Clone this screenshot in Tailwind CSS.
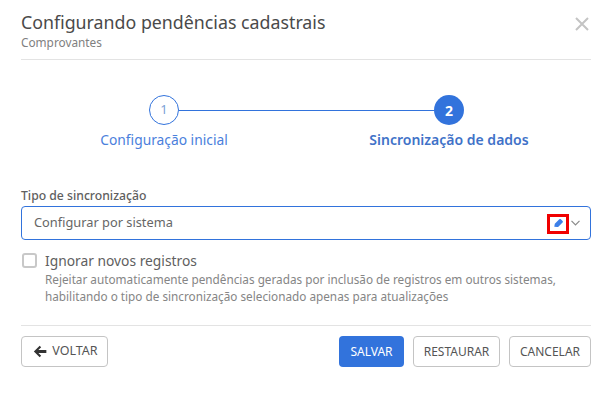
<!DOCTYPE html>
<html lang="pt-BR">
<head>
    <meta charset="UTF-8">
    <title>Configurando pendências cadastrais</title>
    <script src="https://cdn.jsdelivr.net/npm/@tailwindcss/browser@4"></script>
</head>
<body class="bg-white font-['Noto_Sans',sans-serif] text-[#444]">
    <div class="w-[613px] h-[414px] pl-[21px] pr-[22px] pt-[10px] flex flex-col">
        <!-- header -->
        <div class="flex justify-between border-b border-[#e3e3e3] h-[50px]">
            <div>
                <h1 class="text-[17.8px] leading-[24px] text-[#4a4a4a]">Configurando pendências cadastrais</h1>
                <p class="mt-px text-[11.8px] leading-[14px] text-[#808080]">Comprovantes</p>
            </div>
            <svg class="w-[14px] h-[14px] mt-[7px] mr-[2px]" viewBox="0 0 14 14" fill="none" stroke="#c4c4c4" stroke-width="2"><path d="M1 1l12 12M13 1L1 13"/></svg>
        </div>

        <!-- stepper -->
        <div class="flex mt-[35px] pl-[79px]">
            <div class="w-[128px] flex flex-col items-center">
                <div class="w-[30px] h-[30px] rounded-full border border-[#3273dc] flex items-center justify-center text-[13px] text-[#7d9fd6]">1</div>
                <span class="mt-[5px] text-[13.8px] leading-[20px] text-[#4a80dc] whitespace-nowrap">Configuração inicial</span>
            </div>
            <div class="w-[255px] h-px bg-[#3273dc] mt-[15px] ml-[-49px] mr-[-65px]"></div>
            <div class="w-[160px] flex flex-col items-center">
                <div class="w-[30px] h-[30px] rounded-full bg-[#3273dc] flex items-center justify-center text-[14px] font-bold text-white">2</div>
                <span class="mt-[5px] text-[14px] leading-[20px] font-semibold text-[#3f72c8] whitespace-nowrap">Sincronização de dados</span>
            </div>
        </div>

        <!-- form -->
        <label class="mt-[38px] text-[12.2px] leading-[16px] font-medium text-[#606060]">Tipo de sincronização</label>
        <div class="mt-[2px] h-[34px] border border-[#3273dc] rounded-[4px] flex items-center pl-[12px] pr-[10px]">
            <span class="flex-1 text-[12.8px] text-[#666]">Configurar por sistema</span>
            <span class="relative w-[10px] h-[10px] mr-[7px]">
                <svg class="w-[9px] h-[9px]" viewBox="0 0 10 10"><path d="M0.3 9.7l0.6-3.2 5-5c0.5-0.5 1.2-0.5 1.7 0l1.9 1.9c0.5 0.5 0.5 1.2 0 1.7l-5 5z" fill="#3d7fe8"/></svg>
                <span class="absolute left-[-7px] top-[-4px] w-[22px] h-[20px] border-[3px] border-[#f00000]"></span>
            </span>
            <svg class="w-[9px] h-[6px]" viewBox="0 0 9 6" fill="none" stroke="#8a8a8a" stroke-width="1.2"><path d="M0.5 0.8l4 4 4-4"/></svg>
        </div>

        <div class="flex mt-[11px]">
            <span class="w-[15px] h-[15px] mt-[2px] ml-[1px] border-2 border-[#c8c8c8] rounded-[3px]"></span>
            <div class="ml-[8px]">
                <p class="text-[13.8px] leading-[20px] text-[#606060]">Ignorar novos registros</p>
                <p class="text-[11.75px] leading-[17px] text-[#858585] whitespace-nowrap">Rejeitar automaticamente pendências geradas por inclusão de registros em outros sistemas,<br>habilitando o tipo de sincronização selecionado apenas para atualizações</p>
            </div>
        </div>

        <!-- footer -->
        <div class="mt-[20px] border-t border-[#e3e3e3] pt-[10px] flex">
            <button class="h-[31px] w-[87px] border border-[#c4c4c4] rounded-[4px] flex items-center justify-center gap-[5px] pl-[2px] text-[12.5px] text-[#555]">
                <svg class="w-[14px] h-[13px]" viewBox="0 0 13 12" fill="#333"><path d="M6.2 0.6l1.4 1.4-2.6 2.6h7.4v2.8h-7.4l2.6 2.6-1.4 1.4-5.4-5.4z"/></svg>
                VOLTAR
            </button>
            <div class="ml-auto flex gap-[9px]">
                <button class="h-[31px] w-[65px] bg-[#3273dc] rounded-[4px] text-[12px] text-white">SALVAR</button>
                <button class="h-[31px] w-[87px] border border-[#c4c4c4] rounded-[4px] text-[12px] text-[#555]">RESTAURAR</button>
                <button class="h-[31px] w-[82px] border border-[#c4c4c4] rounded-[4px] text-[12px] text-[#555]">CANCELAR</button>
            </div>
        </div>
    </div>
</body>
</html>
